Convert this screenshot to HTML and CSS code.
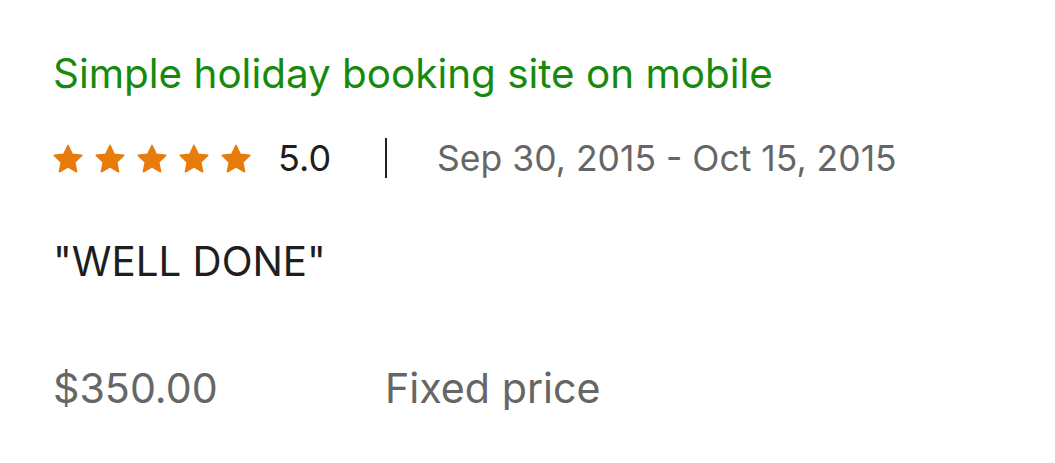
FILE: index.html
```html
<!DOCTYPE html>
<html>
  <head>
    <title>Job feedback</title>
    <link rel="stylesheet" href="styles.css">
  </head>
  <body>
    <div class="job">
      <h2 class="job-title">Simple holiday booking site on mobile</h2>
      <div class="rating-row">
        <div class="stars">
          <svg viewBox="1.6 1.6 20.8 19.8"><path d="M12 2.5l2.9 6.1 6.6.8-4.9 4.6 1.3 6.6L12 17.3l-5.9 3.3 1.3-6.6-4.9-4.6 6.6-.8z"/></svg>
          <svg viewBox="1.6 1.6 20.8 19.8"><path d="M12 2.5l2.9 6.1 6.6.8-4.9 4.6 1.3 6.6L12 17.3l-5.9 3.3 1.3-6.6-4.9-4.6 6.6-.8z"/></svg>
          <svg viewBox="1.6 1.6 20.8 19.8"><path d="M12 2.5l2.9 6.1 6.6.8-4.9 4.6 1.3 6.6L12 17.3l-5.9 3.3 1.3-6.6-4.9-4.6 6.6-.8z"/></svg>
          <svg viewBox="1.6 1.6 20.8 19.8"><path d="M12 2.5l2.9 6.1 6.6.8-4.9 4.6 1.3 6.6L12 17.3l-5.9 3.3 1.3-6.6-4.9-4.6 6.6-.8z"/></svg>
          <svg viewBox="1.6 1.6 20.8 19.8"><path d="M12 2.5l2.9 6.1 6.6.8-4.9 4.6 1.3 6.6L12 17.3l-5.9 3.3 1.3-6.6-4.9-4.6 6.6-.8z"/></svg>
        </div>
        <span class="score">5.0</span>
        <span class="divider"></span>
        <span class="dates">Sep 30, 2015 - Oct 15, 2015</span>
      </div>
      <p class="comment">"WELL DONE"</p>
      <div class="price-row">
        <span class="price">$350.00</span>
        <span class="price-type">Fixed price</span>
      </div>
    </div>
  </body>
</html>
```

FILE: styles.css
```css
body {
  margin: 0;
  background: #fff;
  font-family: Inter, "Liberation Sans", sans-serif;
}
.job {
  padding: 52px 53px 0;
}
.job-title {
  margin: 0;
  font-size: 40.4px;
  font-weight: normal;
  color: #178a0e;
  line-height: 44px;
}
.rating-row {
  display: flex;
  align-items: center;
  margin-top: 40px;
  height: 44px;
}
.stars {
  display: flex;
  gap: 12px;
}
.stars svg {
  width: 30px;
  height: 29px;
  fill: #e77b0c;
  stroke: #e77b0c;
  stroke-width: 1.2;
  stroke-linejoin: round;
}
.score {
  margin-left: 27px;
  font-size: 36px;
  color: #1e1e1e;
}
.divider {
  width: 2px;
  height: 40px;
  background: #222;
  margin: 0 50px 0 54px;
}
.dates {
  font-size: 35.5px;
  color: #666;
}
.comment {
  margin: 60px 0 0;
  font-size: 40.3px;
  line-height: 44px;
  color: #1e1e1e;
}
.price-row {
  display: flex;
  margin-top: 82px;
  font-size: 41.2px;
  line-height: 44px;
  color: #666;
}
.price {
  width: 332px;
}
```
